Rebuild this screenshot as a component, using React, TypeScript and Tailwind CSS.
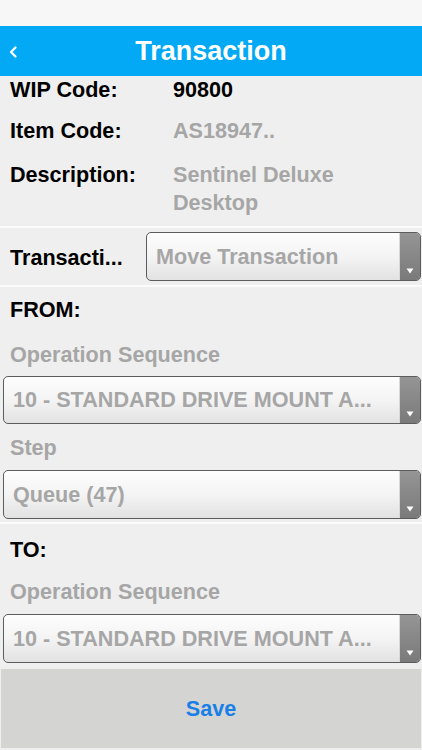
import React from "react";

const Dropdown = ({ value, className = "" }: { value: string; className?: string }) => (
  <div
    className={`flex items-stretch rounded-[5px] border border-[#5c5c5c] bg-gradient-to-b from-[#fdfdfd] via-[#f4f4f4] to-[#e2e2e2] overflow-hidden ${className}`}
  >
    <div className="flex-1 min-w-0 flex items-center pl-[9px] text-[#a6a6a6] whitespace-nowrap overflow-hidden">
      {value}
    </div>
    <div className="w-[21px] shrink-0 border-l border-[#d8d8d8] bg-gradient-to-b from-[#959595] to-[#7a7a7a] flex items-end justify-center pb-[6px]">
      <svg width="8" height="6" viewBox="0 0 8 6">
        <path d="M0.5 0.5 L7.5 0.5 L4 5.5 Z" fill="#ffffff" />
      </svg>
    </div>
  </div>
);

const Separator = () => <div className="h-[2px] bg-[#fbfbfb]" />;

export default function App() {
  return (
    <div className="w-[422px] h-[750px] overflow-hidden bg-[#efefef] font-['Liberation_Sans',Arial,sans-serif] font-bold text-[21.6px] leading-[28px]">
      <div className="h-[26px] bg-[#f7f7f7]" />

      <header className="h-[50px] bg-[#03a9f4] relative flex items-center justify-center">
        <svg
          className="absolute left-[9px] top-[20px]"
          width="9"
          height="12"
          viewBox="0 0 9 12"
          fill="none"
        >
          <path d="M6.5 1.5 L2 6 L6.5 10.5" stroke="#ffffff" strokeWidth="2.2" strokeLinecap="round" strokeLinejoin="round" />
        </svg>
        <h1 className="text-white text-[27px] leading-[32px]">Transaction</h1>
      </header>

      <section className="pl-[10px] pb-[9px]">
        <div className="flex">
          <span className="w-[163px] text-black">WIP Code:</span>
          <span className="text-black">90800</span>
        </div>
        <div className="flex mt-[13px]">
          <span className="w-[163px] text-black">Item Code:</span>
          <span className="text-[#a6a6a6]">AS18947..</span>
        </div>
        <div className="flex mt-[16px]">
          <span className="w-[163px] shrink-0 text-black">Description:</span>
          <span className="text-[#a6a6a6] w-[180px]">Sentinel Deluxe Desktop</span>
        </div>
      </section>

      <Separator />

      <section className="h-[57px] flex items-center pl-[10px] pr-[1px]">
        <span className="w-[136px] shrink-0 text-black pt-[2px]">Transacti...</span>
        <Dropdown value="Move Transaction" className="flex-1 h-[49px]" />
      </section>

      <Separator />

      <section className="pt-[9px] pb-[3px] pl-[3px] pr-[1px]">
        <div className="pl-[7px] text-black">FROM:</div>
        <div className="pl-[7px] mt-[17px] text-[#a6a6a6]">Operation Sequence</div>
        <Dropdown value="10 - STANDARD DRIVE MOUNT A..." className="mt-[7px] h-[48px]" />
        <div className="pl-[7px] mt-[10px] text-[#a6a6a6]">Step</div>
        <Dropdown value="Queue (47)" className="mt-[8px] h-[49px]" />
      </section>

      <Separator />

      <section className="pt-[12px] pb-[6px] pl-[3px] pr-[1px]">
        <div className="pl-[7px] text-black">TO:</div>
        <div className="pl-[7px] mt-[14px] text-[#a6a6a6]">Operation Sequence</div>
        <Dropdown value="10 - STANDARD DRIVE MOUNT A..." className="mt-[8px] h-[49px]" />
      </section>

      <div className="pl-[1px] pr-[1px]">
        <button className="w-full h-[79px] bg-[#d4d5d3] flex items-center justify-center text-[#1a7fe6]">
          Save
        </button>
      </div>
    </div>
  );
}
